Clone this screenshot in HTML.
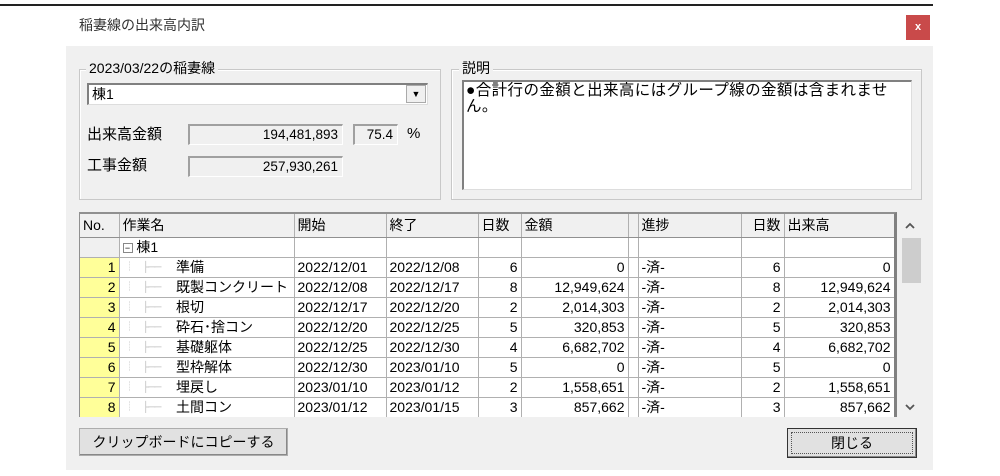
<!DOCTYPE html>
<html><head><meta charset="utf-8"><style>
*{margin:0;padding:0;box-sizing:border-box}
body{width:1000px;height:476px;background:#fff;position:relative;overflow:hidden;font-family:"Liberation Sans","Noto Sans CJK JP",sans-serif;font-size:14px;color:#000}
.a{position:absolute}
.win{left:66px;top:46px;width:867px;height:424px;background:#f0f0f0}
.grp{border:1px solid #c8c8c8;box-shadow:inset 1px 1px 0 #fff}
.lg{background:#f0f0f0;padding:0 3px;font-size:14px;line-height:15px}
.fld{background:#f0f0f0;border-top:2px solid #a0a0a0;border-left:2px solid #a0a0a0;border-bottom:1px solid #fff;border-right:1px solid #fff;text-align:right;padding-right:4px;line-height:18px;font-size:13.5px}
table{border-collapse:collapse;table-layout:fixed;font-size:14px}
td{border-right:1px solid #b0b0b0;border-bottom:1px solid #b0b0b0;height:20px;padding:0 3px;white-space:nowrap;overflow:hidden;background:#fff;line-height:17px;vertical-align:middle}
td *{vertical-align:top;line-height:17px}
tr{height:20px}
tr.h{height:23px}
tr.h td{background:#f0f0f0;height:23px;border-bottom:1px solid #909090}
td.n{background:#ffff99;text-align:right}
td.n0{background:#f0f0f0}
.r{text-align:right}
.tree{color:#bbb;font-size:10px;letter-spacing:-1px}
.btn{background:#e1e1e1;border:1px solid #adadad;box-shadow:inset -1px -1px 0 #888;text-align:center;line-height:26px;font-size:14px}
</style></head><body>
<div class="a" style="left:0;top:4px;width:933px;height:2px;background:#222"></div>
<div class="a" style="left:79px;top:15px;font-size:14px;color:#333">稲妻線の出来高内訳</div>
<div class="a" style="left:906px;top:15px;width:24px;height:25px;background:#c94a4a;color:#fff;font-size:11px;font-weight:bold;text-align:center;line-height:24px">x</div>
<div class="a win"></div>

<div class="a grp" style="left:79px;top:69px;width:362px;height:131px"></div>
<div class="a lg" style="left:86px;top:61px">2023/03/22の稲妻線</div>
<div class="a" style="left:87px;top:83px;width:341px;height:22px;background:#fff;border-top:2px solid #808080;border-left:2px solid #808080;border-bottom:1px solid #ddd;border-right:1px solid #ddd;padding-left:3px;line-height:18px">棟1</div>
<div class="a" style="left:406px;top:85px;width:20px;height:18px;background:#f0f0f0;border:1px solid #aaa;text-align:center;font-size:9px;line-height:17px">▼</div>
<div class="a" style="left:87px;top:123px;font-size:15px">出来高金額</div>
<div class="a fld" style="left:188px;top:124px;width:155px;height:21px">194,481,893</div>
<div class="a fld" style="left:353px;top:124px;width:45px;height:21px">75.4</div>
<div class="a" style="left:407px;top:125px;font-size:15px">%</div>
<div class="a" style="left:87px;top:154px;font-size:15px">工事金額</div>
<div class="a fld" style="left:188px;top:156px;width:155px;height:21px">257,930,261</div>

<div class="a grp" style="left:451px;top:69px;width:471px;height:131px"></div>
<div class="a lg" style="left:459px;top:61px">説明</div>
<div class="a" style="left:462px;top:80px;width:450px;height:110px;background:#fff;border-top:2px solid #808080;border-left:2px solid #808080;border-bottom:1px solid #ddd;border-right:1px solid #ddd;padding:1px 2px;line-height:16px;font-size:15.5px;letter-spacing:0.4px;white-space:nowrap;overflow:hidden">●合計行の金額と出来高にはグループ線の金額は含まれませ<br>ん。</div>

<div class="a" style="left:79px;top:212px;width:818px;height:205px;border-top:2px solid #909090;border-left:1px solid #909090;border-right:3px solid #808080;overflow:hidden;background:#fff">
<table style="width:814px">
<colgroup><col style="width:39px"><col style="width:175px"><col style="width:92px"><col style="width:92px"><col style="width:43px"><col style="width:107px"><col style="width:10px"><col style="width:103px"><col style="width:43px"><col style="width:110px"></colgroup>
<tr class="h"><td>No.</td><td>作業名</td><td>開始</td><td>終了</td><td>日数</td><td>金額</td><td></td><td>進捗</td><td class="r">日数</td><td>出来高</td></tr>
<tr><td class="n0"></td><td><span style="border:1px solid #888;font-size:9px;line-height:8px;display:inline-block;width:10px;height:10px;text-align:center;margin-top:4px">−</span> 棟1</td><td></td><td></td><td></td><td></td><td></td><td></td><td></td><td></td></tr>
<tr><td class="n">1</td><td><span class="tree">&nbsp;┊&nbsp;&nbsp;&nbsp;&nbsp;&nbsp;├──</span>&nbsp;&nbsp;&nbsp;&nbsp;準備</td><td>2022/12/01</td><td>2022/12/08</td><td class="r">6</td><td class="r">0</td><td></td><td>-済-</td><td class="r">6</td><td class="r">0</td></tr>
<tr><td class="n">2</td><td><span class="tree">&nbsp;┊&nbsp;&nbsp;&nbsp;&nbsp;&nbsp;├──</span>&nbsp;&nbsp;&nbsp;&nbsp;既製コンクリート</td><td>2022/12/08</td><td>2022/12/17</td><td class="r">8</td><td class="r">12,949,624</td><td></td><td>-済-</td><td class="r">8</td><td class="r">12,949,624</td></tr>
<tr><td class="n">3</td><td><span class="tree">&nbsp;┊&nbsp;&nbsp;&nbsp;&nbsp;&nbsp;├──</span>&nbsp;&nbsp;&nbsp;&nbsp;根切</td><td>2022/12/17</td><td>2022/12/20</td><td class="r">2</td><td class="r">2,014,303</td><td></td><td>-済-</td><td class="r">2</td><td class="r">2,014,303</td></tr>
<tr><td class="n">4</td><td><span class="tree">&nbsp;┊&nbsp;&nbsp;&nbsp;&nbsp;&nbsp;├──</span>&nbsp;&nbsp;&nbsp;&nbsp;砕石･捨コン</td><td>2022/12/20</td><td>2022/12/25</td><td class="r">5</td><td class="r">320,853</td><td></td><td>-済-</td><td class="r">5</td><td class="r">320,853</td></tr>
<tr><td class="n">5</td><td><span class="tree">&nbsp;┊&nbsp;&nbsp;&nbsp;&nbsp;&nbsp;├──</span>&nbsp;&nbsp;&nbsp;&nbsp;基礎躯体</td><td>2022/12/25</td><td>2022/12/30</td><td class="r">4</td><td class="r">6,682,702</td><td></td><td>-済-</td><td class="r">4</td><td class="r">6,682,702</td></tr>
<tr><td class="n">6</td><td><span class="tree">&nbsp;┊&nbsp;&nbsp;&nbsp;&nbsp;&nbsp;├──</span>&nbsp;&nbsp;&nbsp;&nbsp;型枠解体</td><td>2022/12/30</td><td>2023/01/10</td><td class="r">5</td><td class="r">0</td><td></td><td>-済-</td><td class="r">5</td><td class="r">0</td></tr>
<tr><td class="n">7</td><td><span class="tree">&nbsp;┊&nbsp;&nbsp;&nbsp;&nbsp;&nbsp;├──</span>&nbsp;&nbsp;&nbsp;&nbsp;埋戻し</td><td>2023/01/10</td><td>2023/01/12</td><td class="r">2</td><td class="r">1,558,651</td><td></td><td>-済-</td><td class="r">2</td><td class="r">1,558,651</td></tr>
<tr><td class="n">8</td><td><span class="tree">&nbsp;┊&nbsp;&nbsp;&nbsp;&nbsp;&nbsp;├──</span>&nbsp;&nbsp;&nbsp;&nbsp;土間コン</td><td>2023/01/12</td><td>2023/01/15</td><td class="r">3</td><td class="r">857,662</td><td></td><td>-済-</td><td class="r">3</td><td class="r">857,662</td></tr>
</table></div>
<div class="a" style="left:897px;top:213px;width:25px;height:204px;background:#f0f0f0"></div>
<svg class="a" style="left:904px;top:221px" width="12" height="10"><path d="M2 7 L6 3 L10 7" stroke="#555" stroke-width="1.8" fill="none"/></svg>
<div class="a" style="left:902px;top:238px;width:19px;height:45px;background:#cdcdcd"></div>
<svg class="a" style="left:904px;top:402px" width="12" height="10"><path d="M2 3 L6 7 L10 3" stroke="#555" stroke-width="1.8" fill="none"/></svg>

<div class="a btn" style="left:79px;top:428px;width:209px;height:28px">クリップボードにコピーする</div>
<div class="a btn" style="left:787px;top:428px;width:130px;height:30px;border:1px solid #333"><div style="margin:3px;border:1px dotted #555;line-height:20px">閉じる</div></div>
</body></html>
